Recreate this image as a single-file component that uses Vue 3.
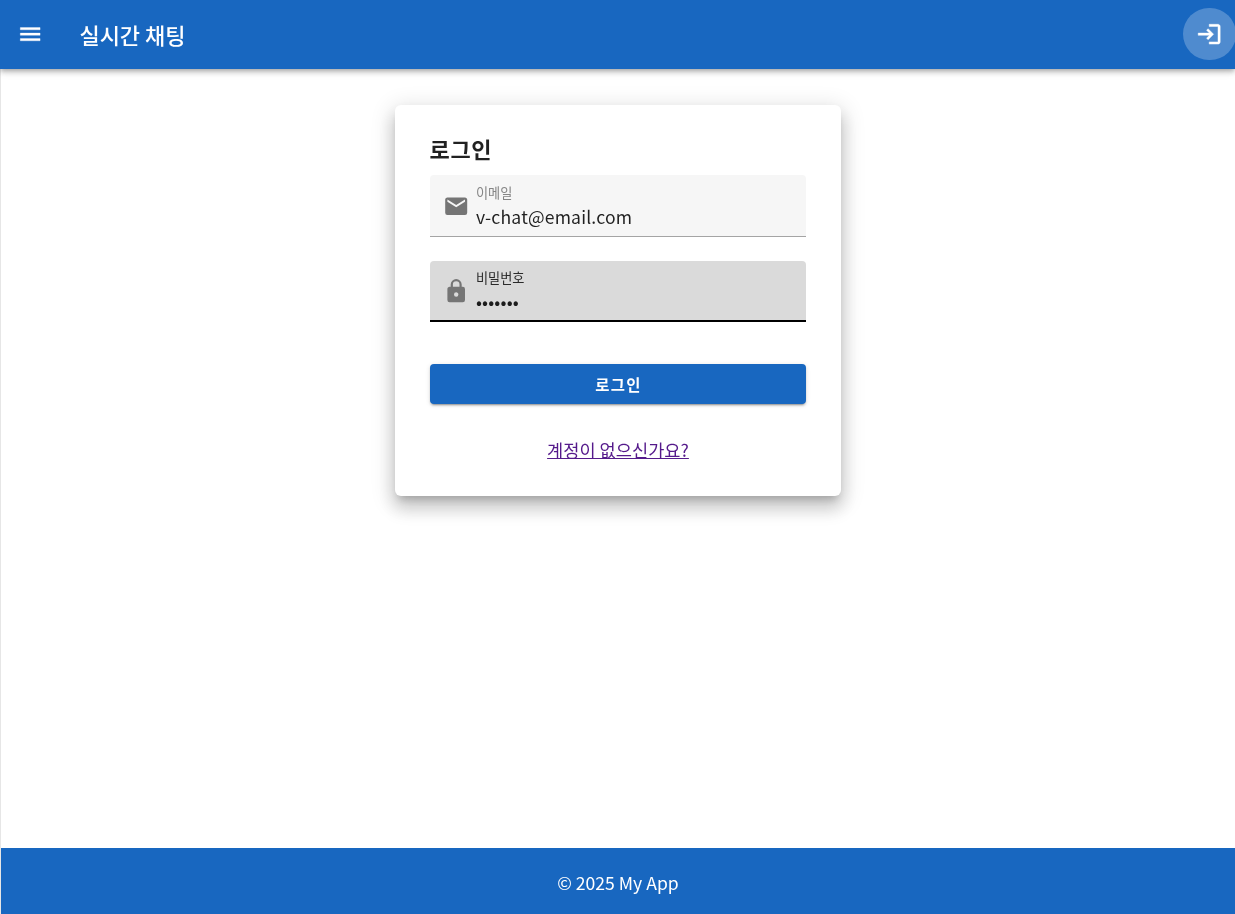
<script setup>
const fields = [
  { key: 'email', label: '이메일', value: 'v-chat@email.com', focused: false, icon: 'M20,8L12,13L4,8V6L12,11L20,6M20,4H4C2.89,4 2,4.89 2,6V18A2,2 0 0,0 4,20H20A2,2 0 0,0 22,18V6C22,4.89 21.1,4 20,4Z' },
  { key: 'password', label: '비밀번호', value: '•••••••', focused: true, icon: 'M12,17A2,2 0 0,0 14,15C14,13.89 13.1,13 12,13A2,2 0 0,0 10,15A2,2 0 0,0 12,17M18,8A2,2 0 0,1 20,10V20A2,2 0 0,1 18,22H6A2,2 0 0,1 4,20V10C4,8.89 4.9,8 6,8H7V6A5,5 0 0,1 12,1A5,5 0 0,1 17,6V8H18M12,3A3,3 0 0,0 9,6V8H15V6A3,3 0 0,0 12,3Z' }
]
</script>

<template>
  <div class="app">
    <header class="bar">
      <button class="menu" aria-label="menu">
        <svg width="26.4" height="26.4" viewBox="0 0 24 24"><path d="M3,6H21V8H3V6M3,11H21V13H3V11M3,16H21V18H3V16Z" fill="#fff" stroke="#fff" stroke-width="0.3" /></svg>
      </button>
      <div class="title">실시간 채팅</div>
      <button class="login-icon" aria-label="login">
        <svg width="26.4" height="26.4" viewBox="0 0 24 24"><path d="M11 7L9.6 8.4L12.2 11H2V13H12.2L9.6 15.6L11 17L16 12L11 7M20 19H12V21H20C21.1 21 22 20.1 22 19V5C22 3.9 21.1 3 20 3H12V5H20V19Z" fill="#fff" stroke="#fff" stroke-width="0.4" /></svg>
      </button>
    </header>
    <div class="body">
      <main class="main">
        <section class="card">
          <h1 class="card-title">로그인</h1>
          <div v-for="f in fields" :key="f.key" class="field" :class="{ focused: f.focused }">
            <svg class="field-icon" width="26.4" height="26.4" viewBox="0 0 24 24"><path :d="f.icon" fill="currentColor" /></svg>
            <div class="field-text">
              <span class="field-label">{{ f.label }}</span>
              <span class="field-value">{{ f.value }}</span>
            </div>
          </div>
          <button class="submit">로그인</button>
          <div class="link-row"><a class="link" href="#">계정이 없으신가요?</a></div>
        </section>
      </main>
      <footer class="footer">© 2025 My App</footer>
    </div>
  </div>
</template>

<style>
html, body { margin: 0; padding: 0; background: #fff; }
</style>

<style scoped>
.app {
  height: 914px;
  display: flex;
  flex-direction: column;
  overflow: hidden;
  font-family: "Noto Sans CJK KR", "Noto Sans", sans-serif;
  color: rgba(0, 0, 0, 0.87);
  will-change: transform;
}
.bar {
  height: 69px;
  flex: none;
  background: #1867c0;
  color: #fff;
  display: flex;
  align-items: center;
  position: relative;
  z-index: 2;
  box-shadow: 0 2px 4px -1px rgba(0,0,0,.2), 0 4px 5px rgba(0,0,0,.14), 0 1px 10px rgba(0,0,0,.12);
}
button { border: 0; padding: 0; background: none; font-family: inherit; }
.menu {
  width: 26.4px;
  height: 26.4px;
  margin-left: 17px;
  display: flex;
}
.title {
  margin-left: 36px;
  margin-bottom: 2px;
  font-size: 22px;
  font-weight: 500;
  line-height: 28px;
}
.login-icon {
  margin-left: auto;
  margin-right: -1px;
  margin-bottom: 1px;
  width: 52.8px;
  height: 52.8px;
  border-radius: 50%;
  background: rgba(255, 255, 255, 0.24);
  display: flex;
  align-items: center;
  justify-content: center;
}
.body {
  flex: 1;
  display: flex;
  flex-direction: column;
  border-left: 1px solid #e6e6e6;
}
.main {
  flex: 1;
  display: flex;
  justify-content: center;
  align-items: flex-start;
  padding-top: 36px;
  padding-right: 1px;
}
.card {
  width: 446px;
  box-sizing: border-box;
  height: 391px;
  padding: 27px 35px 0;
  background: #fff;
  border-radius: 6px;
  box-shadow: 0 7px 8px -4px rgba(0,0,0,.2), 0 12px 17px 2px rgba(0,0,0,.14), 0 5px 22px 4px rgba(0,0,0,.12);
  display: flex;
  flex-direction: column;
}
.card-title {
  margin: 0 0 11px;
  font-size: 22px;
  font-weight: 700;
  letter-spacing: 0.03em;
  line-height: 32px;
  color: rgba(0, 0, 0, 0.87);
}
.field {
  height: 62px;
  box-sizing: border-box;
  margin-bottom: 24px;
  padding-left: 13px;
  display: flex;
  align-items: center;
  gap: 7px;
  background: #f6f6f6;
  border-radius: 4px 4px 0 0;
  border-bottom: 1px solid #a4a4a4;
  color: #757575;
}
.field.focused {
  height: 61px;
  background: #dadada;
  border-bottom: 2px solid #000;
}
.field-icon { flex: none; margin-top: 1px; }
.focused .field-icon { margin-top: 2px; }
.field-text {
  display: flex;
  flex-direction: column;
  align-self: stretch;
  padding-top: 8px;
}
.focused .field-text { padding-top: 7px; }
.field-label {
  font-size: 13.2px;
  line-height: 20px;
  color: #858585;
}
.focused .field-label { color: #2a2a2a; }
.field-value {
  font-size: 17.6px;
  line-height: 24px;
  letter-spacing: 0.009375em;
  margin-top: 2px;
  color: rgba(0, 0, 0, 0.87);
}
.submit {
  height: 40px;
  margin-top: 18px;
  padding-left: 2px;
  border-radius: 4px;
  background: #1867c0;
  color: #fff;
  font-size: 15.4px;
  font-weight: 700;
  letter-spacing: 0.0892em;
  box-shadow: 0 3px 1px -2px rgba(0,0,0,.2), 0 2px 2px rgba(0,0,0,.14), 0 1px 5px rgba(0,0,0,.12);
}
.link-row {
  margin-top: 32px;
  padding-left: 1px;
  text-align: center;
  line-height: 28px;
  font-size: 17.6px;
}
.link { color: #551a8b; text-decoration: underline; }
.footer {
  height: 66px;
  flex: none;
  background: #1867c0;
  color: #fff;
  font-size: 17.6px;
  padding-top: 2px;
  box-sizing: border-box;
  display: flex;
  align-items: center;
  justify-content: center;
}
</style>
